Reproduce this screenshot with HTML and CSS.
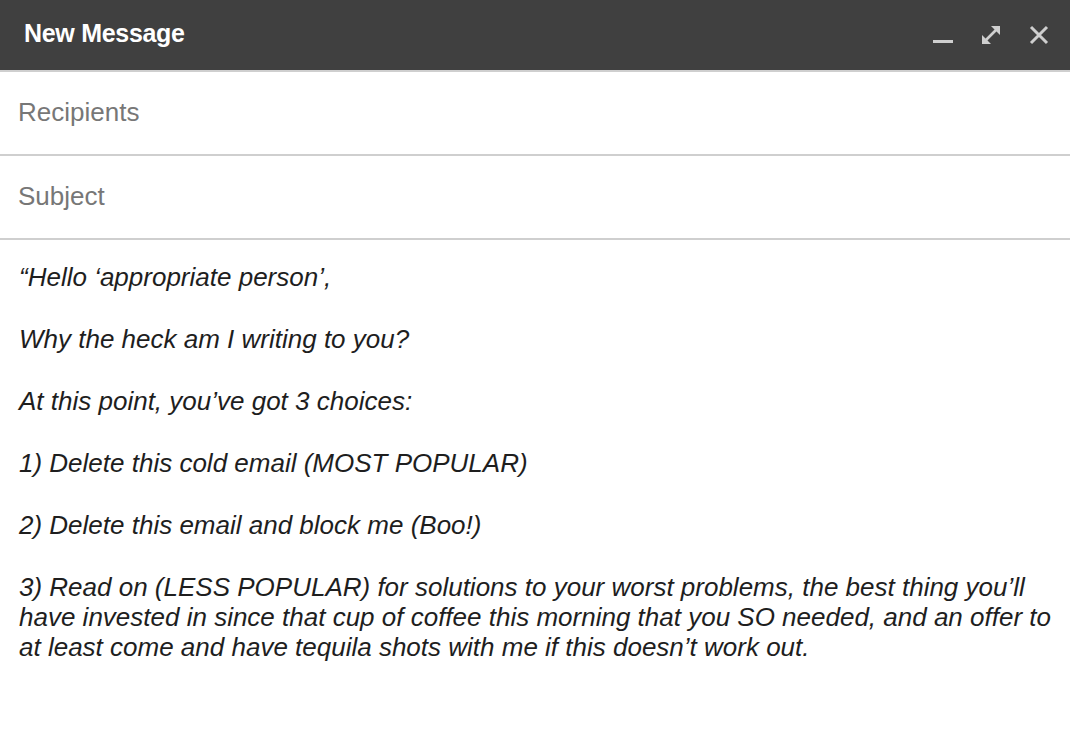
FILE: index.html
```html
<!DOCTYPE html>
<html lang="en">
<head>
    <meta charset="UTF-8">
    <title>New Message</title>
    <link rel="stylesheet" href="styles.css">
</head>
<body>
<div class="compose">
    <div class="titlebar">
        <span class="title">New Message</span>
        <div class="tools">
            <a href="javascript:;" class="tool" title="Minimize">
                <svg width="22" height="22" viewBox="0 0 22 22"><rect x="1" y="16" width="20" height="3" fill="#cfcfcf"/></svg>
            </a>
            <a href="javascript:;" class="tool" title="Full screen">
                <svg width="22" height="22" viewBox="0 0 22 22">
                    <path d="M4 18 L18 4" stroke="#cfcfcf" stroke-width="2.6" fill="none"/>
                    <path d="M11 2 H20 V11 Z" fill="#cfcfcf"/>
                    <path d="M2 11 V20 H11 Z" fill="#cfcfcf"/>
                </svg>
            </a>
            <a href="javascript:;" class="tool" title="Close">
                <svg width="22" height="22" viewBox="0 0 22 22">
                    <path d="M3 3 L19 19 M19 3 L3 19" stroke="#cfcfcf" stroke-width="3" fill="none"/>
                </svg>
            </a>
        </div>
    </div>

    <div class="field">Recipients</div>
    <div class="field">Subject</div>

    <div class="body">
        <p>“Hello ‘appropriate person’,</p>
        <p>Why the heck am I writing to you?</p>
        <p>At this point, you’ve got 3 choices:</p>
        <p>1) Delete this cold email (MOST POPULAR)</p>
        <p>2) Delete this email and block me (Boo!)</p>
        <p>3) Read on (LESS POPULAR) for solutions to your worst problems, the best thing you’ll<br>have invested in since that cup of coffee this morning that you SO needed, and an offer to<br>at least come and have tequila shots with me if this doesn’t work out.</p>
    </div>
</div>
</body>
</html>
```

FILE: styles.css
```css
*{
    margin:0;
    padding:0;
}
html,body{
    width:100%;
    height:100%;
    background:#fff;
}
body{
    font-family:"Liberation Sans",Arial,sans-serif;
}
a{
    text-decoration:none;
}
.compose{
    width:1070px;
}
.titlebar{
    height:70px;
    background-color:#404040;
    border-bottom:2px solid #cfcfcf;
    display:flex;
    align-items:center;
    justify-content:space-between;
    padding:0 20px 0 24px;
}
.title{
    color:#fff;
    font-size:25px;
    font-weight:bold;
    letter-spacing:-0.3px;
    margin-bottom:4px;
}
.tools{
    display:flex;
    gap:26px;
    align-items:center;
}
.tool{
    display:block;
    width:22px;
    height:22px;
}
.tool svg{
    display:block;
}
.field{
    height:82px;
    line-height:80px;
    padding-left:18px;
    border-bottom:2px solid #cfcfcf;
    color:#777;
    font-size:26px;
}
.body{
    padding:22px 0 0 19px;
    color:#1e1e1e;
    font-size:26px;
    font-style:italic;
    line-height:30px;
}
.body p{
    margin-bottom:32px;
}
```
